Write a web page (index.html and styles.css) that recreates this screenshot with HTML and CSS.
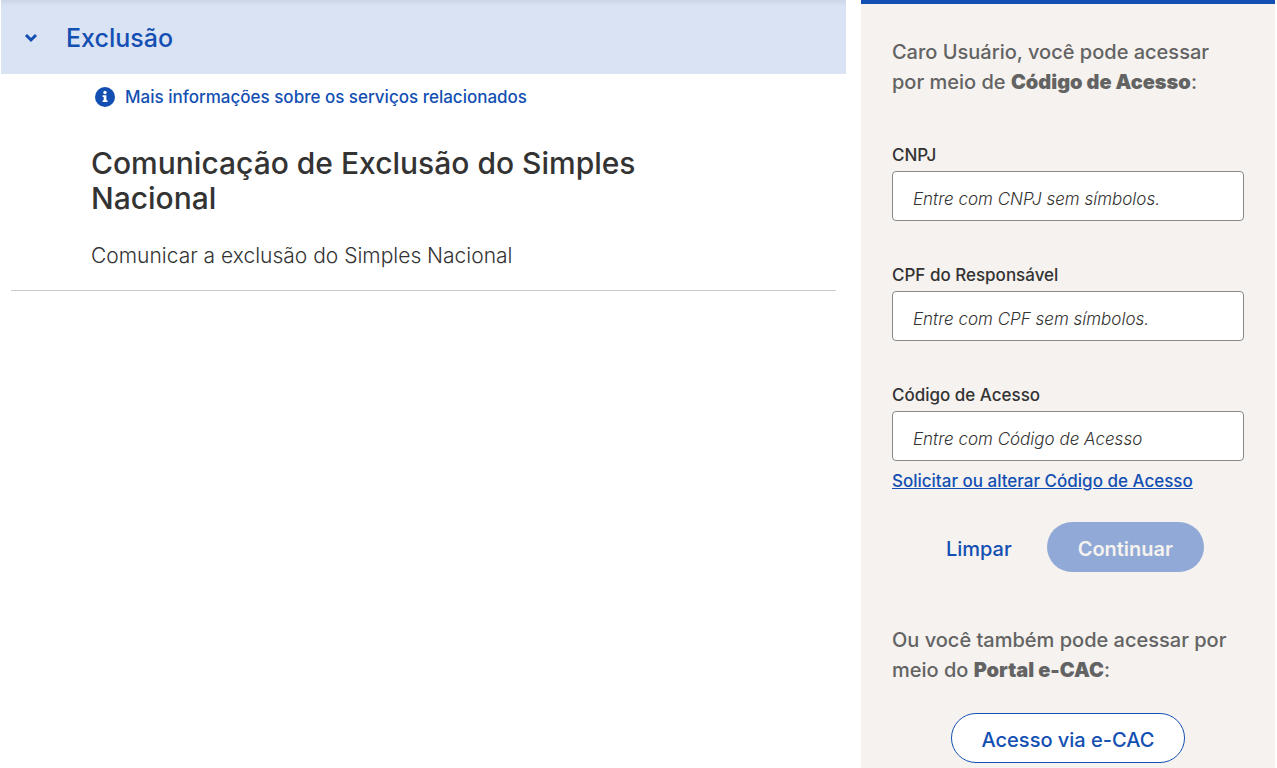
FILE: index.html
```html
<!DOCTYPE html>
<html lang="pt-BR">
<head>
    <meta charset="UTF-8">
    <meta name="viewport" content="width=device-width, initial-scale=1">
    <title>Simples Nacional - Exclusão</title>
    <link rel="stylesheet" href="styles.css">
</head>
<body>
<div class="page">
    <main class="services">
        <button class="services__header" type="button" aria-expanded="true">
            <svg class="services__arrow" viewBox="0 0 14 10" aria-hidden="true">
                <path d="M2 2l5 5 5-5" fill="none" stroke="currentColor" stroke-width="3"/>
            </svg>
            <span>Exclusão</span>
        </button>
        <div class="services__body">
            <a class="services__info" href="#">
                <svg class="services__icon" viewBox="0 0 20 20" aria-hidden="true">
                    <circle cx="10" cy="10" r="10" fill="currentColor"/>
                    <path d="M7.6 8.2h3.8v5h1.1V15H7.6v-1.8h1.1V10H7.6z" fill="#fff"/>
                    <circle cx="10" cy="5.5" r="1.7" fill="#fff"/>
                </svg>
                <span>Mais informações sobre os serviços relacionados</span>
            </a>
            <h2 class="services__title">Comunicação de Exclusão do Simples Nacional</h2>
            <p class="services__text">Comunicar a exclusão do Simples Nacional</p>
        </div>
    </main>
    <aside class="access">
        <p class="access__text">Caro Usuário, você pode acessar por meio de <strong>Código de Acesso</strong>:</p>
        <form class="access__form">
            <div class="field">
                <label for="cnpj">CNPJ</label>
                <input type="text" id="cnpj" placeholder="Entre com CNPJ sem símbolos.">
            </div>
            <div class="field">
                <label for="cpf">CPF do Responsável</label>
                <input type="text" id="cpf" placeholder="Entre com CPF sem símbolos.">
            </div>
            <div class="field">
                <label for="codigo">Código de Acesso</label>
                <input type="text" id="codigo" placeholder="Entre com Código de Acesso">
            </div>
            <a class="access__link" href="#">Solicitar ou alterar Código de Acesso</a>
            <div class="access__buttons">
                <button class="btn" type="reset">Limpar</button>
                <button class="btn btn--primary" type="submit" disabled>Continuar</button>
            </div>
        </form>
        <p class="access__text">Ou você também pode acessar por meio do <strong>Portal e-CAC</strong>:</p>
        <button class="btn btn--outline" type="button">Acesso via e-CAC</button>
    </aside>
</div>
</body>
</html>
```
FILE: styles.css
```css
* {
    box-sizing: border-box;
}

body {
    margin: 0;
    background: #fff;
    color: #333;
    font-family: Inter, sans-serif;
    font-size: 20px;
    line-height: 30px;
}

button, input {
    font-family: inherit;
}

h2, p {
    margin: 0;
}

a {
    color: #134fb3;
}

.page {
    display: flex;
    gap: 15px;
    min-height: 100vh;
    padding: 0 2px 0 1px;
    overflow: hidden;
}

.services {
    flex: 1;
    min-width: 0;
}

.services__header {
    display: flex;
    align-items: center;
    gap: 28px;
    width: 100%;
    height: 74px;
    padding: 2px 23px 0;
    border: 0;
    background: linear-gradient(#cdd6e6, #dae3f4 6px);
    color: #134fb3;
    font-size: 25px;
    font-weight: 500;
    text-align: left;
}

.services__arrow {
    width: 14px;
    height: 10px;
}

.services__body {
    margin: 0 10px;
    padding: 8px 140px 19px 80px;
    border-bottom: 1px solid #ccc;
}

.services__info {
    display: flex;
    align-items: center;
    gap: 10px;
    padding-left: 4px;
    font-size: 17px;
    font-weight: 500;
    text-decoration: none;
}

.services__icon {
    width: 20px;
    height: 20px;
}

.services__title {
    margin: 34px 0 25px;
    font-size: 30px;
    font-weight: 500;
    line-height: 35px;
}

.services__text {
    font-size: 21px;
    font-weight: 300;
}

.access {
    display: flex;
    flex-direction: column;
    width: 32.5%;
    padding: 33px 31px 4px;
    border-top: 4px solid #134fb3;
    background: #f5f2ef;
}

.access__text {
    color: #636363;
    font-weight: 500;
}

.access__text strong {
    font-weight: 900;
}

.access__form {
    padding: 43px 0 53px;
}

.field {
    margin-bottom: 39px;
}

.field label {
    display: block;
    padding-bottom: 1px;
    font-size: 17px;
    font-weight: 500;
}

.field input {
    display: block;
    width: 100%;
    height: 50px;
    padding: 6px 20px 0;
    border: 1px solid #888;
    border-radius: 4px;
    background: #fff;
    color: #333;
    font-size: 17px;
}

.field input::placeholder {
    color: #333;
    font-style: italic;
    font-weight: 300;
    opacity: 1;
}

.field:nth-of-type(3) {
    margin-bottom: 5px;
}

.access__link {
    display: block;
    font-size: 17px;
    font-weight: 500;
}

.access__buttons {
    display: flex;
    justify-content: flex-end;
    gap: 4px;
    margin-top: 26px;
    padding-right: 40px;
}

.btn {
    height: 50px;
    padding: 4px 30px 0;
    border: 1px solid transparent;
    border-radius: 25px;
    background: none;
    color: #134fb3;
    font-size: 20px;
    font-weight: 500;
}

.btn--primary {
    background: #91a9d6;
    color: #f5f2ef;
    font-weight: 600;
}

.btn--outline {
    align-self: center;
    margin-top: 28px;
    border-color: #134fb3;
    background: #fff;
}
```
